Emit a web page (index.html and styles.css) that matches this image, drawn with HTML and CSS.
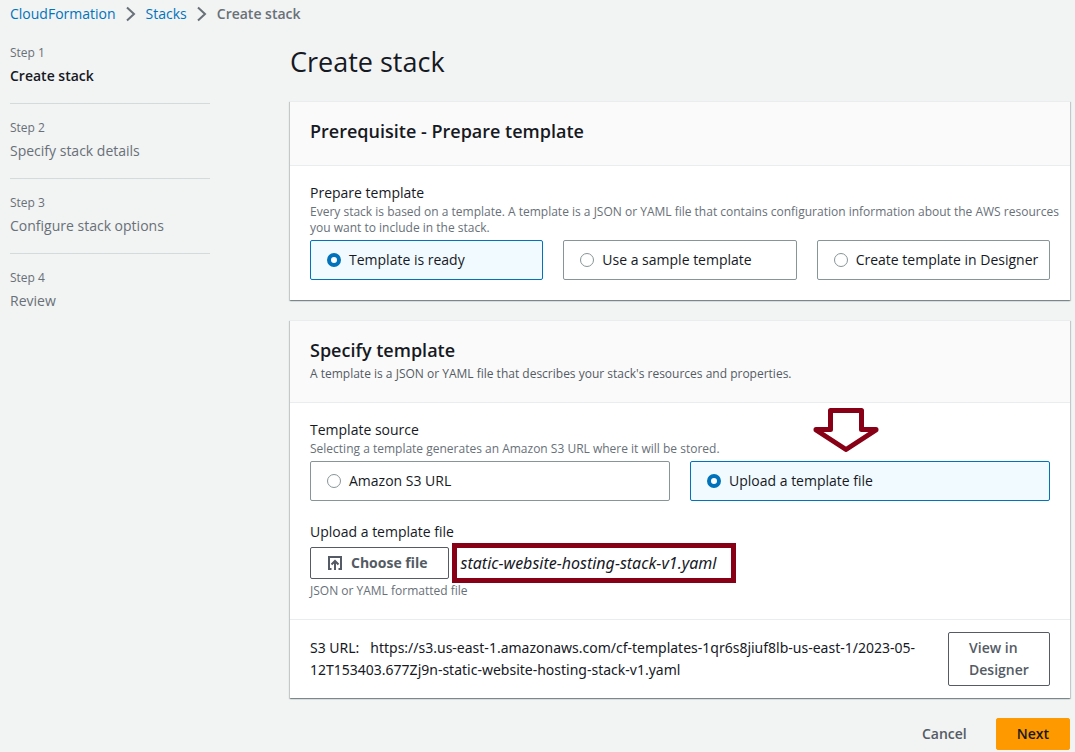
FILE: index.html
```html
<!DOCTYPE html>
<html lang="en">
<head>
<meta charset="utf-8">
<meta name="viewport" content="width=device-width, initial-scale=1">
<title>Create stack</title>
<link rel="stylesheet" href="styles.css">
</head>
<body class="page">
<nav class="breadcrumbs" aria-label="Breadcrumb">
  <a class="link" href="#">CloudFormation</a>
  <svg class="chevron" viewBox="0 0 10 16" aria-hidden="true"><path d="M1 1.500 8 8l-7 6.500"/></svg>
  <a class="link" href="#">Stacks</a>
  <svg class="chevron" viewBox="0 0 10 16" aria-hidden="true"><path d="M1 1.500 8 8l-7 6.500"/></svg>
  <span class="current">Create stack</span>
</nav>
<div class="layout">
  <ol class="steps">
    <li class="step active"><small class="hint">Step 1</small><span class="step-name">Create stack</span></li>
    <li class="step"><small class="hint">Step 2</small><span class="step-name">Specify stack details</span></li>
    <li class="step"><small class="hint">Step 3</small><span class="step-name">Configure stack options</span></li>
    <li class="step"><small class="hint">Step 4</small><span class="step-name">Review</span></li>
  </ol>
  <main class="content">
    <h1 class="title">Create stack</h1>
    <section class="panel">
      <header class="panel-head"><h2 class="panel-title">Prerequisite - Prepare template</h2></header>
      <div class="panel-body">
        <fieldset class="field">
          <legend class="label">Prepare template</legend>
          <p class="hint wide">Every stack is based on a template. A template is a JSON or YAML file that contains configuration information about the AWS resources you want to include in the stack.</p>
          <div class="tiles">
            <label class="tile"><input class="radio" type="radio" name="prepare" checked>Template is ready</label>
            <label class="tile"><input class="radio" type="radio" name="prepare">Use a sample template</label>
            <label class="tile"><input class="radio" type="radio" name="prepare">Create template in Designer</label>
          </div>
        </fieldset>
      </div>
    </section>
    <section class="panel">
      <header class="panel-head">
        <h2 class="panel-title">Specify template</h2>
        <p class="hint dark">A template is a JSON or YAML file that describes your stack's resources and properties.</p>
      </header>
      <div class="panel-body">
        <fieldset class="field">
          <legend class="label">Template source</legend>
          <p class="hint">Selecting a template generates an Amazon S3 URL where it will be stored.</p>
          <div class="tiles">
            <label class="tile"><input class="radio" type="radio" name="source">Amazon S3 URL</label>
            <label class="tile"><input class="radio" type="radio" name="source" checked>Upload a template file
              <svg class="arrow" viewBox="0 0 66 44" aria-hidden="true"><path d="M17.500 2.500h31v19h14.500v.5L33 41.500 3 22v-.5h14.500z"/></svg>
            </label>
          </div>
        </fieldset>
        <div class="field">
          <label class="label" for="choose">Upload a template file</label>
          <div class="upload">
            <button class="button" id="choose" type="button">
              <svg class="icon" viewBox="0 0 16 16" aria-hidden="true"><path d="M4.500 14H2V2h12v12h-2.500M8 15V6M4.500 9.500 8 6l3.500 3.500"/></svg>
              Choose file
            </button>
            <em class="file-name">static-website-hosting-stack-v1.yaml</em>
          </div>
          <p class="hint">JSON or YAML formatted file</p>
        </div>
      </div>
      <footer class="panel-foot">
        <p class="url">S3 URL: &nbsp; https://s3.us-east-1.amazonaws.com/cf-templates-1qr6s8jiuf8lb-us-east-1/2023-05-12T153403.677Zj9n-static-website-hosting-stack-v1.yaml</p>
        <button class="button view" type="button">View in Designer</button>
      </footer>
    </section>
    <div class="actions">
      <button class="button plain" type="button">Cancel</button>
      <button class="button primary" type="button">Next</button>
    </div>
  </main>
</div>
</body>
</html>
```
FILE: styles.css
```css
* { box-sizing: border-box; }

.page {
  margin: 0;
  padding: 3px 5px 2px 10px;
  background: #f2f3f3;
  color: #16191f;
  font: 14px/22px "Open Sans", "Noto Sans", sans-serif;
}

.breadcrumbs { display: flex; align-items: center; gap: 10px; }
.link { color: #0073bb; text-decoration: none; }
.chevron { width: 10px; height: 16px; fill: none; stroke: #687078; stroke-width: 2; }
.current { color: #687078; font-weight: 600; }

.layout { display: flex; gap: 80px; margin-top: 20px; }
.steps { flex: 0 0 200px; margin: 0; padding: 0; list-style: none; color: #687078; }
.step { display: flex; flex-direction: column; gap: 4px; padding-bottom: 16px; }
.step + .step { padding-top: 16px; border-top: 1px solid #d5dbdb; }
.active .step-name { color: #16191f; font-weight: 600; }

.content { flex: 1; min-width: 0; display: flex; flex-direction: column; gap: 20px; }
.title { margin: 0; padding-bottom: 2px; font-size: 27px; line-height: 34px; font-weight: 400; }
.hint { margin: 0; color: #687078; font-size: 12px; line-height: 16px; }
.wide { margin-right: -12px; }
.dark { margin-top: 4px; color: #545b64; }

.panel {
  background: #fff;
  border-top: 1px solid #eaeded;
  box-shadow: 0 1px 1px 0 rgba(0, 28, 36, .3), 1px 1px 1px 0 rgba(0, 28, 36, .15), -1px 1px 1px 0 rgba(0, 28, 36, .15);
}
.panel-head { min-height: 64px; padding: 17px 20px 20px; background: #fafafa; border-bottom: 1px solid #eaeded; }
.panel-title { margin: 0; font-size: 18px; line-height: 24px; font-weight: 600; }
.panel-body { display: flex; flex-direction: column; gap: 20px; padding: 16px 20px 20px; }
.field { min-width: 0; margin: 0; padding: 0; border: 0; }
.label { display: block; padding: 0; }

.tiles { display: grid; grid-auto-flow: column; grid-auto-columns: minmax(0, 1fr); gap: 20px; margin-top: 4px; }
.tile {
  position: relative;
  display: flex;
  align-items: center;
  gap: 8px;
  height: 40px;
  padding: 0 16px;
  border: 1px solid #879596;
  border-radius: 2px;
  white-space: nowrap;
}
.tile:has(:checked) { background: #f1faff; border-color: #0073bb; }
.radio {
  appearance: none;
  flex: none;
  width: 14px;
  height: 14px;
  margin: 0;
  background: #fff;
  border: 1px solid #879596;
  border-radius: 50%;
}
.radio:checked { border: 4px solid #0073bb; }
.arrow { position: absolute; left: 122px; bottom: 48px; width: 66px; height: 44px; fill: #fff; stroke: #880015; stroke-width: 5; stroke-linejoin: round; }

.upload { display: flex; align-items: center; gap: 12px; height: 32px; margin: 4px 0; }
.button {
  display: flex;
  align-items: center;
  gap: 8px;
  padding: 4px 20px;
  border: 1px solid #545b64;
  border-radius: 2px;
  background: #fff;
  color: #545b64;
  font: inherit;
  font-weight: 700;
  text-align: left;
}
.upload .button { padding: 4px 20px 4px 16px; }
.icon { width: 16px; height: 16px; fill: none; stroke: currentColor; stroke-width: 2; }
.file-name { position: relative; font-family: "Noto Sans", sans-serif; font-size: 16px; }
.file-name::after { content: ""; position: absolute; inset: -9px -20px -9px -9px; border: 5px solid #880015; }

.panel-foot { display: flex; align-items: center; justify-content: space-between; gap: 20px; padding: 12px 20px; border-top: 1px solid #eaeded; }
.url { margin: 0; min-width: 0; overflow-wrap: anywhere; font-family: "Noto Sans", sans-serif; }
.view { flex: 0 0 102px; }
.actions { display: flex; justify-content: flex-end; gap: 8px; }
.plain { background: none; border-color: transparent; }
.primary { background: #ff9900; border-color: #ff9900; color: #16191f; }
.view, .plain, .primary { font-weight: 600; }
```
